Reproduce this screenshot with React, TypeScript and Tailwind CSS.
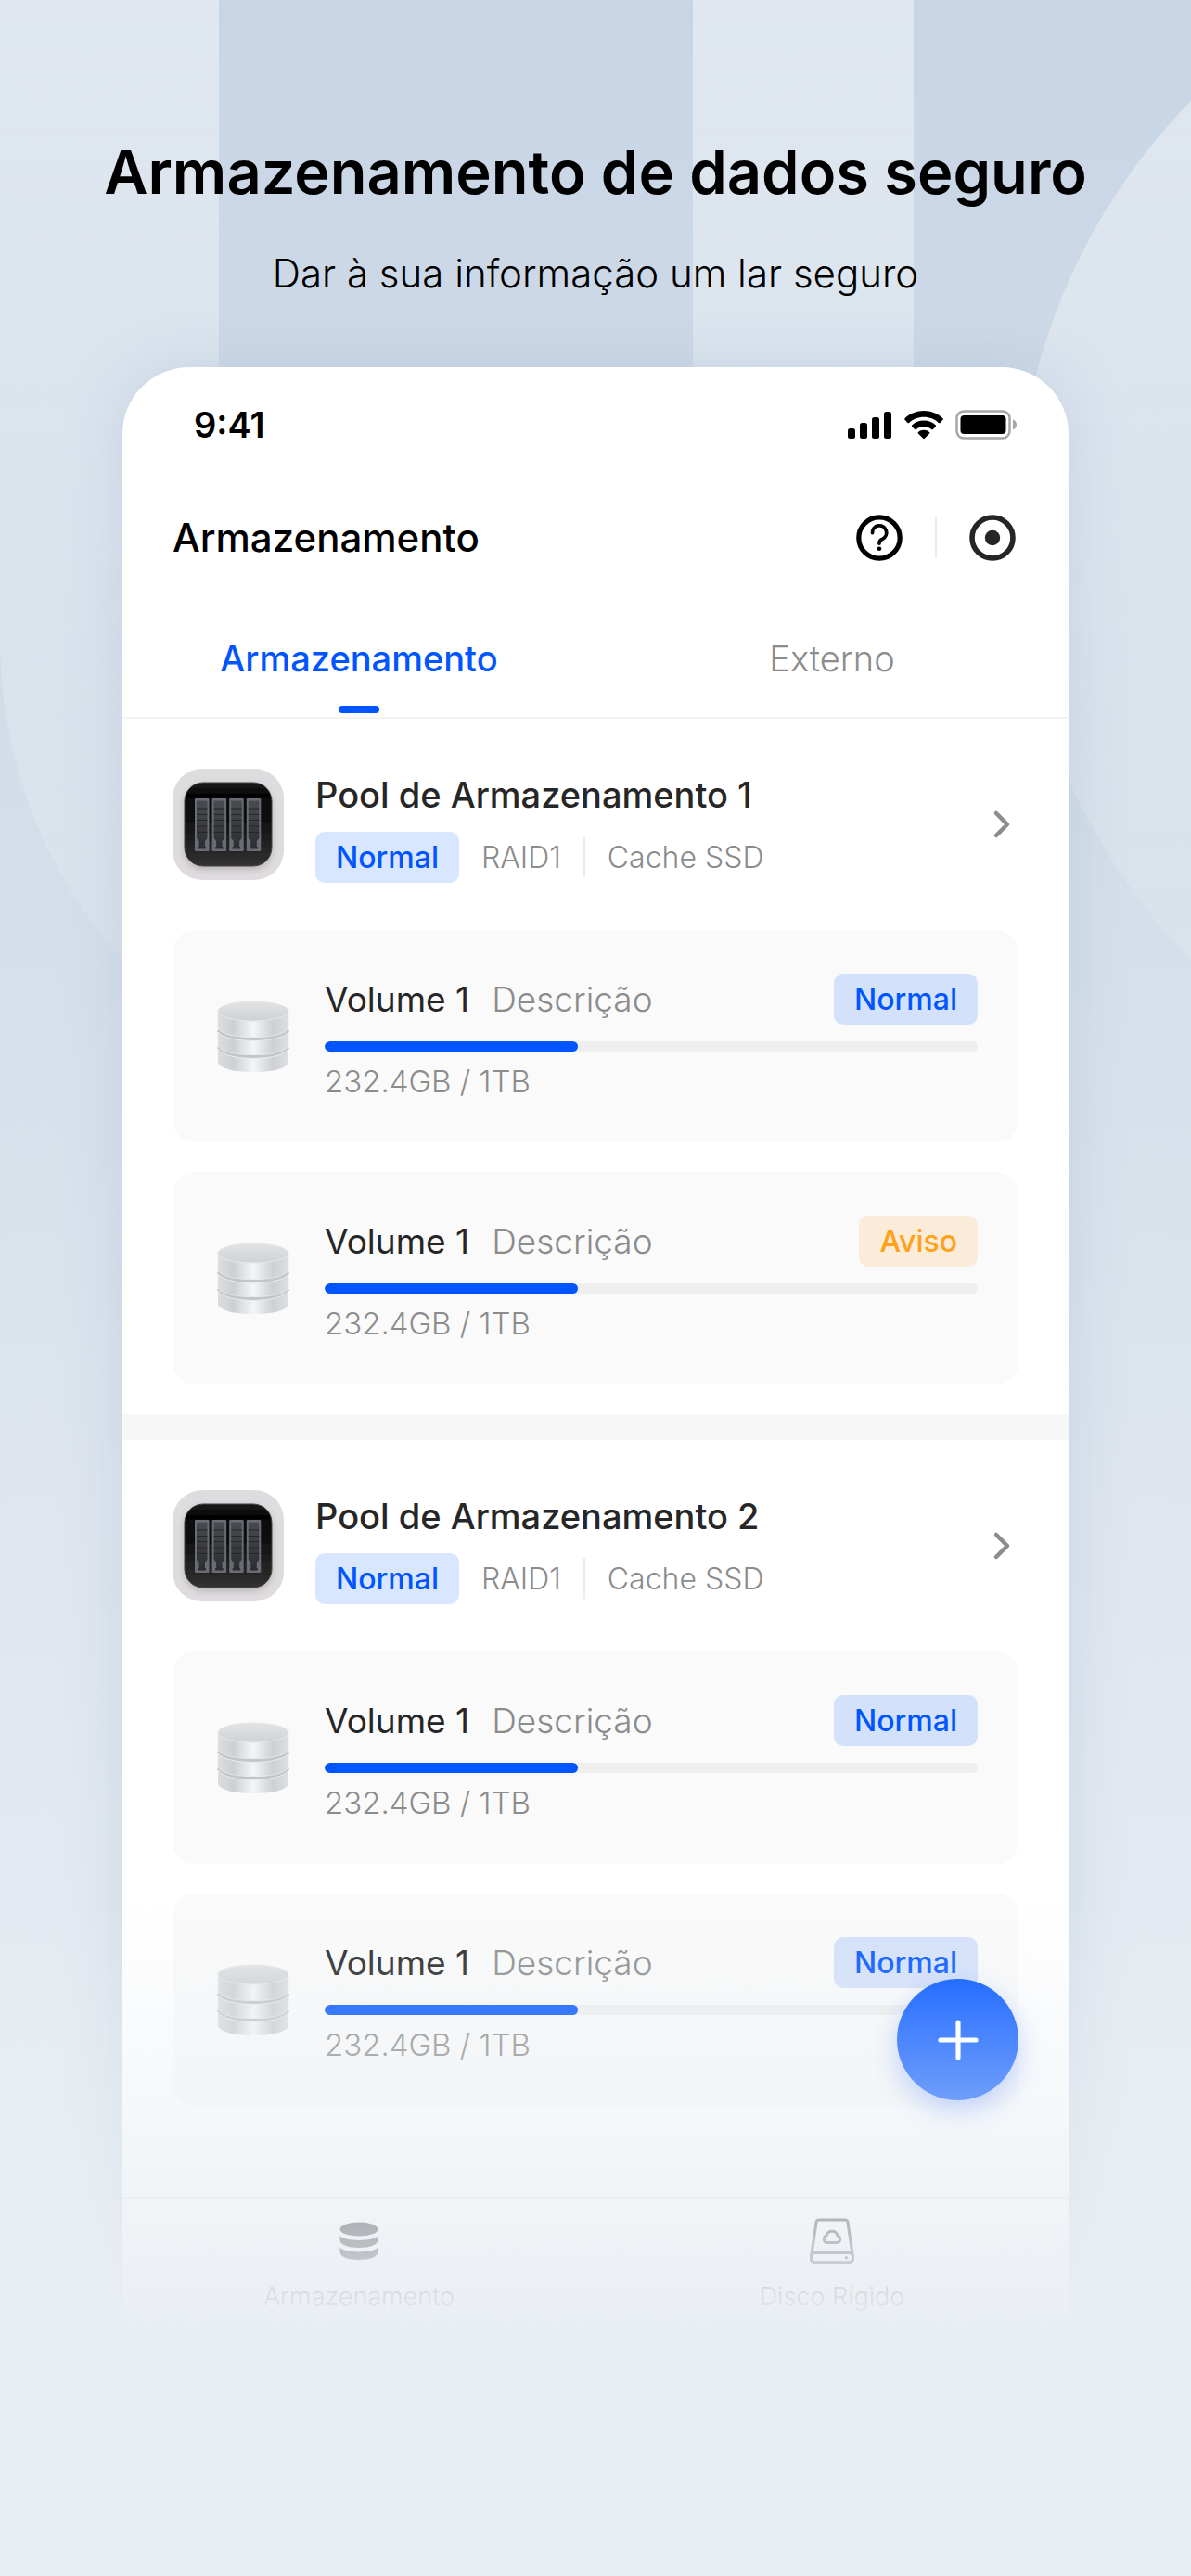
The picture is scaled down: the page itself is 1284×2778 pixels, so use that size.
import { useState, type ReactNode } from "react";

type Status = "Normal" | "Aviso";

type Volume = {
  id: string;
  name: string;
  description: string;
  usage: string;
  percent: number;
  status: Status;
};

type Pool = {
  id: string;
  name: string;
  raid: string;
  cache: string;
  volumes: Volume[];
};

const volume = (id: string, status: Status): Volume => ({
  id,
  name: "Volume 1",
  description: "Descrição",
  usage: "232.4GB / 1TB",
  percent: 38.8,
  status,
});

const POOLS: Pool[] = [
  {
    id: "p1",
    name: "Pool de Armazenamento 1",
    raid: "RAID1",
    cache: "Cache SSD",
    volumes: [volume("p1v1", "Normal"), volume("p1v2", "Aviso")],
  },
  {
    id: "p2",
    name: "Pool de Armazenamento 2",
    raid: "RAID1",
    cache: "Cache SSD",
    volumes: [volume("p2v1", "Normal"), volume("p2v2", "Normal")],
  },
];

const TABS = ["Armazenamento", "Externo"];

function Backdrop() {
  return (
    <svg
      aria-hidden
      className="absolute inset-0 h-full w-full"
      viewBox="0 0 1284 2778"
      preserveAspectRatio="xMidYMin slice"
    >
      <defs>
        <linearGradient id="base" x1="0" y1="0" x2="0" y2="2778" gradientUnits="userSpaceOnUse">
          <stop offset="0" stopColor="#c8d5e5" />
          <stop offset="0.36" stopColor="#d5dfe9" />
          <stop offset="0.6" stopColor="#dfe6ef" />
          <stop offset="0.88" stopColor="#e9eef3" />
          <stop offset="1" stopColor="#e9eef2" />
        </linearGradient>
        <linearGradient id="glow" x1="0" y1="0" x2="0" y2="1196" gradientUnits="userSpaceOnUse">
          <stop offset="0" stopColor="#fff" stopOpacity="0.42" />
          <stop offset="1" stopColor="#fff" stopOpacity="0.06" />
        </linearGradient>
      </defs>
      <rect width="1284" height="2778" fill="url(#base)" />
      <path d="M0 0H236V1000H747V0H985V690A492 506 0 0 1 0 690Z" fill="url(#glow)" />
      <circle cx="1757" cy="572" r="662" fill="url(#glow)" />
    </svg>
  );
}

function SignalIcon() {
  return (
    <svg aria-hidden className="h-[30px] w-12" viewBox="0 0 48 30">
      <rect x="0" y="19" width="8" height="11" rx="2.5" />
      <rect x="13" y="13" width="8" height="17" rx="2.5" />
      <rect x="26" y="7" width="8" height="23" rx="2.5" />
      <rect x="39" y="1" width="8" height="29" rx="2.5" />
    </svg>
  );
}

function WifiIcon() {
  return (
    <svg aria-hidden className="h-[31px] w-[42px]" viewBox="0 0 42 31">
      <path d="M21 0C13 0 5.800 3 0.500 8.200C0 8.700 0 9.300 0.500 9.800L3.500 12.900C4 13.400 4.600 13.400 5.100 12.900C9.300 8.900 15 6.700 21 6.700S32.700 8.900 36.900 12.900C37.400 13.400 38 13.400 38.500 12.900L41.500 9.800C42 9.300 42 8.700 41.500 8.200C36.200 3 29 0 21 0Z" />
      <path d="M21 10.500C16.100 10.500 11.600 12.300 8.200 15.400C7.700 15.900 7.700 16.500 8.200 17L11.200 20C11.700 20.500 12.300 20.500 12.800 20C15 18.100 17.900 17 21 17S27 18.100 29.200 20C29.700 20.500 30.300 20.500 30.800 20L33.800 17C34.300 16.500 34.300 15.900 33.800 15.400C30.400 12.300 25.900 10.500 21 10.500Z" />
      <path d="M21 20.800C18.700 20.800 16.600 21.600 15 22.900C14.400 23.400 14.400 24 14.900 24.500L20.200 29.800C20.700 30.300 21.300 30.300 21.800 29.800L27.100 24.500C27.600 24 27.600 23.400 27 22.900C25.400 21.600 23.300 20.800 21 20.800Z" />
    </svg>
  );
}

function BatteryIcon() {
  return (
    <svg aria-hidden className="h-8 w-[68px]" viewBox="0 0 68 32">
      <rect x="1.500" y="1.500" width="57" height="29" rx="7.500" fill="none" stroke="#a6a6a6" strokeWidth="2.500" />
      <rect x="5.500" y="6" width="49" height="20" rx="4" />
      <path d="M62 10.500C65 11.700 66 14 66 16S65 20.300 62 21.500Z" fill="#a6a6a6" />
    </svg>
  );
}

function HelpIcon() {
  return (
    <svg aria-hidden className="size-14" viewBox="0 0 56 56" fill="none" stroke="#000" strokeLinecap="round" strokeLinejoin="round">
      <circle cx="28" cy="28" r="22.200" strokeWidth="5.200" />
      <path d="M20.500 22.500A7.600 7.600 0 1 1 31.500 29.200Q28 30.500 28 34" strokeWidth="3.800" />
      <circle cx="28" cy="39.800" r="2.300" fill="#000" stroke="none" />
    </svg>
  );
}

function RecordIcon() {
  return (
    <svg aria-hidden className="size-14" viewBox="0 0 56 56">
      <circle cx="28" cy="28" r="22" fill="none" stroke="#262626" strokeWidth="5.600" />
      <circle cx="28" cy="28" r="8.200" fill="#262626" />
    </svg>
  );
}

function PoolIcon() {
  return (
    <svg aria-hidden className="size-[120px] shrink-0" viewBox="0 0 120 120">
      <defs>
        <linearGradient id="case" x1="0" y1="0" x2="0" y2="1">
          <stop offset="0" stopColor="#dddde0" />
          <stop offset="1" stopColor="#dfdbde" />
        </linearGradient>
        <linearGradient id="panel" x1="0" y1="0" x2="0" y2="1">
          <stop offset="0" stopColor="#1c1c1c" />
          <stop offset="0.140" stopColor="#050505" />
          <stop offset="0.450" stopColor="#101010" />
          <stop offset="1" stopColor="#323232" />
        </linearGradient>
        <linearGradient id="slot" x1="0" y1="0" x2="0" y2="1">
          <stop offset="0" stopColor="#4a4b50" />
          <stop offset="1" stopColor="#2b2d31" />
        </linearGradient>
        <filter id="panelShadow" x="-20%" y="-20%" width="140%" height="150%">
          <feDropShadow dx="0" dy="3" stdDeviation="3.500" floodColor="#000" floodOpacity="0.18" />
        </filter>
      </defs>
      <rect width="120" height="120" rx="32" fill="url(#case)" />
      <rect x="13" y="15" width="94" height="90" rx="20" fill="url(#panel)" stroke="#444" strokeWidth="1" filter="url(#panelShadow)" />
      {[24, 42.600, 61.200, 79.800].map((x) => (
        <g key={x} transform={`translate(${x} 32)`}>
          <rect width="15.500" height="57" rx="1" fill="#696c74" />
          <path d="M2 2.500H13.500V43L11 46V52H12V54.500H3.500V52H4.500V46L2 43Z" fill="url(#slot)" />
          <path d="M2 11H13.500M2 17.500H13.500M2 23.500H13.500M2 30H13.500M2 36.500H13.500" stroke="#26272b" strokeWidth="1" />
        </g>
      ))}
    </svg>
  );
}

function VolumeIcon() {
  return (
    <svg aria-hidden className="h-[78px] w-[78px] shrink-0" viewBox="0 0 78 78">
      <defs>
        <linearGradient id="drum" x1="0" y1="0" x2="1" y2="0">
          <stop offset="0" stopColor="#dcdde0" />
          <stop offset="0.220" stopColor="#cdd0d3" />
          <stop offset="0.500" stopColor="#f4f5f7" />
          <stop offset="0.780" stopColor="#ccd0d4" />
          <stop offset="1" stopColor="#dedfe2" />
        </linearGradient>
        <linearGradient id="lid" x1="0" y1="0" x2="0" y2="1">
          <stop offset="0" stopColor="#e2e3e4" />
          <stop offset="1" stopColor="#cfd1d4" />
        </linearGradient>
      </defs>
      <path d="M1 48V67C4 74 20 77 39 77S74 74 77 67V48Z" fill="url(#drum)" />
      <path d="M1 50C6 57 22 60.500 39 60.500S72 57 77 50" fill="none" stroke="#c3c5c9" strokeWidth="3" />
      <path d="M1 52C6 59.500 22 62.500 39 62.500S72 59.500 77 52" fill="none" stroke="#e9eaec" strokeWidth="1" />
      <path d="M1 30V49C5 56 22 58.500 39 58.500S73 56 77 49V30Z" fill="url(#drum)" stroke="#e9eaec" strokeWidth="0.800" />
      <path d="M1 32C6 38.500 22 41.500 39 41.500S72 38.500 77 32" fill="none" stroke="#c3c5c9" strokeWidth="3" />
      <path d="M1 34C6 40.500 22 43.500 39 43.500S72 40.500 77 34" fill="none" stroke="#e9eaec" strokeWidth="1" />
      <path d="M1 11V30C5 37 22 39.500 39 39.500S73 37 77 30V11Z" fill="url(#drum)" stroke="#e9eaec" strokeWidth="0.800" />
      <ellipse cx="39" cy="11.500" rx="38" ry="10.500" fill="url(#lid)" stroke="#e6e7e9" strokeWidth="1" />
    </svg>
  );
}

function StackIcon() {
  return (
    <svg aria-hidden className="size-14" viewBox="0 0 56 56" fill="#262626">
      <ellipse cx="28" cy="15" rx="20.500" ry="7.500" />
      <path d="M7.500 22C12 28.500 44 28.500 48.500 22V27C48.500 31.500 40 35 28 35S7.500 31.500 7.500 27Z" />
      <path d="M7.500 34.500C12 41 44 41 48.500 34.500V39.500C48.500 44.500 40 48 28 48S7.500 44.500 7.500 39.500Z" />
    </svg>
  );
}

function DiskIcon() {
  return (
    <svg aria-hidden className="size-14" viewBox="0 0 56 56" fill="none" stroke="#3a3a3a" strokeWidth="3" strokeLinejoin="round">
      <path d="M14 5H42Q44.500 5 44.900 7.500L50.500 45Q51 51 45 51H11Q5 51 5.500 45L11.100 7.500Q11.500 5 14 5Z" />
      <rect x="5.500" y="40.500" width="45" height="10.500" rx="4.500" />
      <path d="M22.500 29.500H33.500A4 4 0 0 0 34 21.800A6.200 6.200 0 0 0 22 21.800A4 4 0 0 0 22.500 29.500Z" />
      <circle cx="43.500" cy="45.700" r="1.800" fill="#3a3a3a" stroke="none" />
    </svg>
  );
}

function StatusBadge({ status }: { status: Status }) {
  return (
    <span
      className={
        "rounded-[10px] px-[22px] text-[32px] leading-[55px] font-medium " +
        (status === "Normal" ? "bg-[#0055ff]/15 text-[#0055ff]" : "bg-[#ffa11a]/15 text-[#ffa11a]")
      }
    >
      {status}
    </span>
  );
}

function VolumeCard({ item }: { item: Volume }) {
  return (
    <li className="flex items-center gap-[38px] rounded-3xl bg-[#fafafa] pt-[47px] pr-11 pb-[46px] pl-12">
      <VolumeIcon />
      <div className="min-w-0 flex-1">
        <div className="flex items-center justify-between">
          <h3 className="flex items-baseline gap-6 text-[37px] leading-[55px] text-[#262626]">
            {item.name}
            <span className="font-light text-[#8c8c8c]">{item.description}</span>
          </h3>
          <StatusBadge status={item.status} />
        </div>
        <div
          role="progressbar"
          aria-label={item.name}
          aria-valuenow={item.percent}
          className="mt-[18px] h-[11px] overflow-hidden rounded-full bg-[#efefef]"
        >
          <div className="h-full rounded-full bg-[#0055ff]" style={{ width: `${item.percent}%` }} />
        </div>
        <p className="mt-3 text-[33px] leading-10 font-light text-[#8c8c8c]">{item.usage}</p>
      </div>
    </li>
  );
}

function PoolSection({ pool }: { pool: Pool }) {
  return (
    <section className="px-[54px] pt-[54px] pb-8">
      <button type="button" className="flex h-[120px] w-full items-center gap-[34px] text-left">
        <PoolIcon />
        <span className="flex flex-1 flex-col">
          <span className="text-[38px] leading-[60px] font-medium text-[#262626]">{pool.name}</span>
          <span className="mt-[10px] flex items-center text-[32px] leading-[55px] font-light text-[#8c8c8c]">
            <StatusBadge status="Normal" />
            <span className="ml-6">{pool.raid}</span>
            <span className="mx-6 h-11 w-[2px] bg-[#ececec]" />
            {pool.cache}
          </span>
        </span>
        <svg aria-hidden className="h-9 w-9" viewBox="0 0 36 36" fill="none" stroke="#8c8c8c" strokeWidth="4.500" strokeLinecap="round" strokeLinejoin="round">
          <path d="M12 6L24 18L12 30" />
        </svg>
      </button>
      <ul className="mt-[54px] flex flex-col gap-8">
        {pool.volumes.map((item) => (
          <VolumeCard key={item.id} item={item} />
        ))}
      </ul>
    </section>
  );
}

function NavItem({ label, children }: { label: string; children: ReactNode }) {
  return (
    <a href="#" className="flex flex-1 flex-col items-center pt-[18px] text-[27px] leading-10 font-light text-[#404040]">
      {children}
      <span className="mt-3">{label}</span>
    </a>
  );
}

export default function App() {
  const [tab, setTab] = useState(TABS[0]);

  return (
    <main className="relative min-h-screen overflow-hidden bg-[#e9eef2] font-[Inter,sans-serif]">
      <Backdrop />

      <div className="relative px-[132px] pt-[146px]">
        <header className="-mx-[100px] text-center text-black">
          <h1 className="text-[65px] leading-20 font-semibold">Armazenamento de dados seguro</h1>
          <p className="mt-[42px] text-[42px] leading-[54px] font-light">Dar à sua informação um lar seguro</p>
        </header>

        <div className="relative mt-[74px] rounded-t-[72px] bg-white shadow-[0_0_64px_rgba(120,150,180,0.22)]">
          <div className="flex h-[124px] items-center justify-between pr-[54px] pl-[77px]">
            <span className="text-[38px] leading-10 font-semibold">9:41</span>
            <div className="flex items-center gap-[13px]">
              <SignalIcon />
              <WifiIcon />
              <BatteryIcon />
            </div>
          </div>

          <div className="flex h-[120px] items-center justify-between px-[54px]">
            <h2 className="text-[42px] leading-[54px] font-medium text-black">Armazenamento</h2>
            <div className="flex items-center gap-8">
              <button type="button" aria-label="Ajuda">
                <HelpIcon />
              </button>
              <span className="h-11 w-[2px] bg-[#ececec]" />
              <button type="button" aria-label="Fechar">
                <RecordIcon />
              </button>
            </div>
          </div>

          <div role="tablist" className="flex border-b-2 border-[#f3f3f3]">
            {TABS.map((label) => (
              <button
                key={label}
                type="button"
                role="tab"
                aria-selected={tab === label}
                onClick={() => setTab(label)}
                className={
                  "flex flex-1 flex-col items-center pt-[43px] pb-1 text-[38px] leading-[54px] " +
                  (tab === label ? "font-medium text-[#0055ff]" : "font-light text-[#8c8c8c]")
                }
              >
                {label}
                <span className={"mt-6 h-2 w-11 rounded-full " + (tab === label ? "bg-[#0055ff]" : "")} />
              </button>
            ))}
          </div>

          <div className="relative pb-[66px]">
            <div className="divide-y-[28px] divide-[#f7f7f7]">
              {POOLS.map((pool) => (
                <PoolSection key={pool.id} pool={pool} />
              ))}
            </div>
            <button
              type="button"
              aria-label="Adicionar"
              className="absolute right-[54px] bottom-[104px] z-20 flex size-[131px] items-center justify-center rounded-full bg-linear-to-b from-[#236dff] to-[#6f9dfb] shadow-[0_10px_28px_rgba(60,120,255,0.28)]"
            >
              <svg aria-hidden className="size-11" viewBox="0 0 44 44" stroke="#fcfdff" strokeWidth="5.200" strokeLinecap="round">
                <path d="M22 3V41M3 22H41" />
              </svg>
            </button>
          </div>

          <nav className="flex h-[150px] border-t-2 border-[#e4e6e8]/60">
            <NavItem label="Armazenamento">
              <StackIcon />
            </NavItem>
            <NavItem label="Disco Rígido">
              <DiskIcon />
            </NavItem>
          </nav>

          <div className="pointer-events-none absolute -inset-x-[132px] -bottom-20 z-10 h-[550px] bg-linear-to-b from-[#e9eef3]/0 via-[#e9eef3]/68 via-62% to-[#e9eef3] to-84%" />
        </div>
      </div>
    </main>
  );
}
